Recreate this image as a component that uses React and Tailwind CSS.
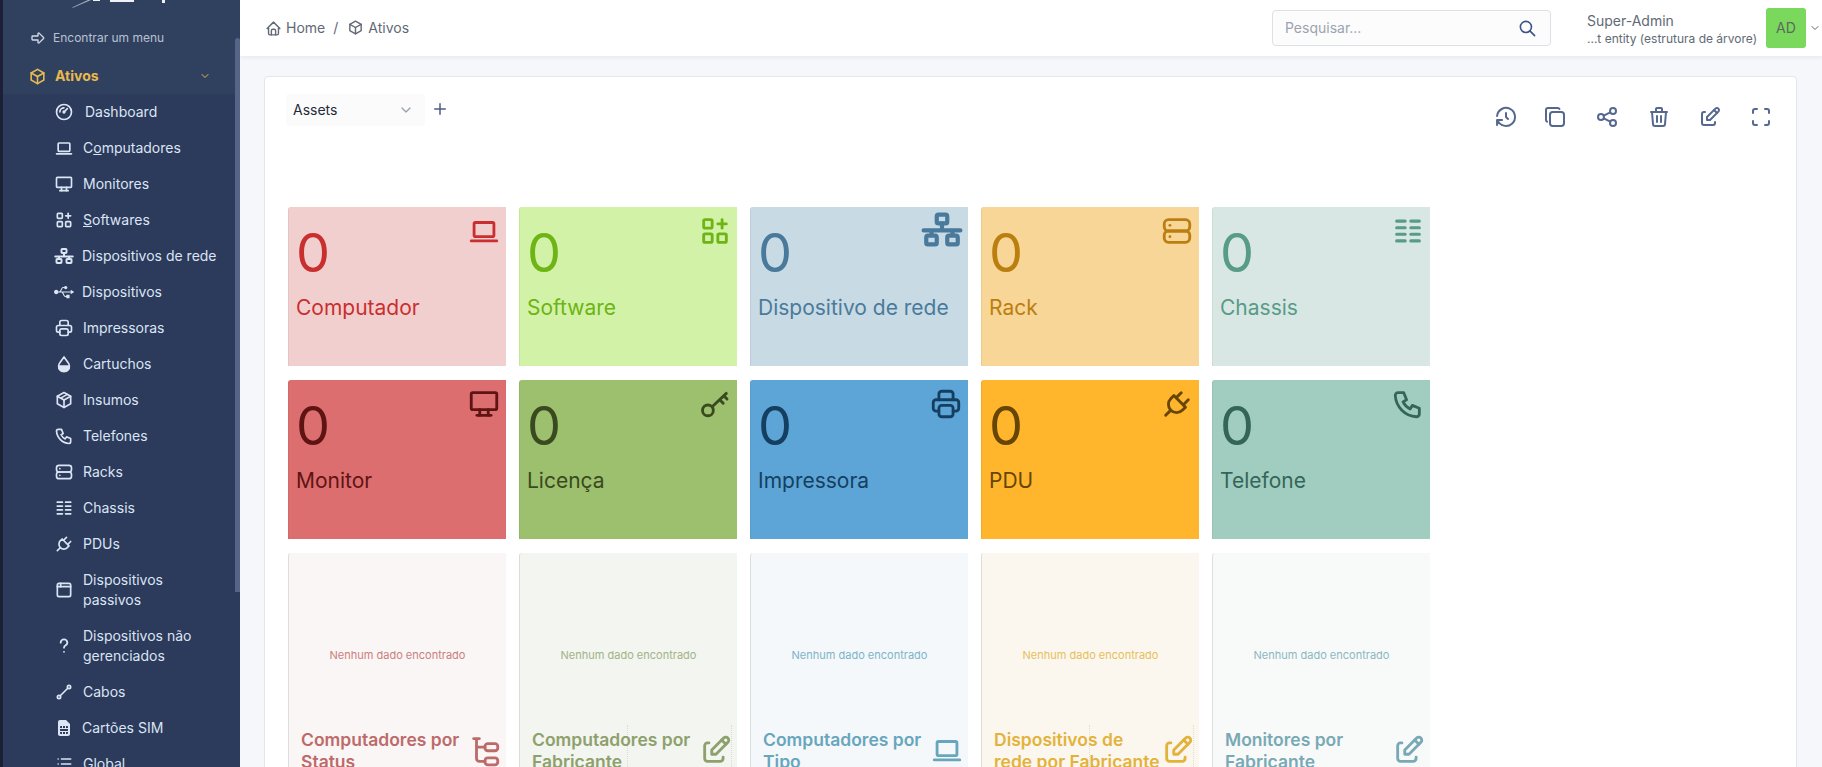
import React from "react";
import {
  TbArrowBigRight,
  TbBox,
  TbChevronDown,
  TbGauge,
  TbDeviceLaptop,
  TbDeviceDesktop,
  TbApps,
  TbPrinter,
  TbPackage,
  TbPhone,
  TbServer,
  TbPlug,
  TbLine,
  TbList,
  TbHome,
  TbSearch,
  TbPlus,
  TbHistory,
  TbCopy,
  TbShare,
  TbTrash,
  TbEdit,
  TbMaximize,
  TbBrowser,
} from "react-icons/tb";
import { FaUsb, FaSimCard } from "react-icons/fa";

function SitemapIcon({ className }) {
  return (
    <svg className={className} viewBox="0 0 24 20" fill="none" stroke="currentColor" strokeWidth="2.400" strokeLinecap="round" strokeLinejoin="round">
      <rect x="9" y="1.500" width="6" height="5" rx="1" />
      <path d="M12 6.500v4M1.500 10.500h21M6 10.500v2.500M18 10.500v2.500" />
      <rect x="3" y="13.500" width="6" height="5" rx="1" />
      <rect x="15" y="13.500" width="6" height="5" rx="1" />
    </svg>
  );
}

function ChassisIcon({ className }) {
  return (
    <svg className={className} viewBox="0 0 24 24" fill="none" stroke="currentColor" strokeWidth="2.200" strokeLinecap="round">
      <path d="M4 5h6M4 9.700h6M4 14.300h6M4 19h6M14 5h6M14 9.700h6M14 14.300h6M14 19h6" />
    </svg>
  );
}

function DropIcon({ className }) {
  return (
    <svg className={className} viewBox="0 0 24 24" fill="none" stroke="currentColor" strokeWidth="2" strokeLinecap="round" strokeLinejoin="round">
      <path d="M12 3.500l5 7a6.500 6.500 0 1 1 -10 0z" />
      <path d="M6 14.500h12v3l-3 3h-6l-3 -3z" fill="currentColor" />
    </svg>
  );
}

function QuestionIcon({ className }) {
  return (
    <svg className={className} viewBox="0 0 24 24" fill="none" stroke="currentColor" strokeWidth="2.200" strokeLinecap="round" strokeLinejoin="round">
      <path d="M8 8a4 4 0 0 1 8 0c0 1.500 -.8 2.400 -2 3.200c-1.300 .9 -2 1.600 -2 2.800" />
      <path d="M12 19v.01" />
    </svg>
  );
}

function OldKeyIcon({ className }) {
  return (
    <svg className={className} viewBox="0 0 24 24" fill="none" stroke="currentColor" strokeWidth="2" strokeLinecap="round" strokeLinejoin="round">
      <circle cx="7" cy="16.500" r="3.800" />
      <path d="M10 14l10 -9.500M15.500 9.200l2.300 2.300M18.500 6.500l2 2" />
    </svg>
  );
}

function TreeIcon({ className }) {
  return (
    <svg className={className} viewBox="0 0 24 24" fill="none" stroke="currentColor" strokeWidth="2" strokeLinecap="round" strokeLinejoin="round">
      <path d="M4 4h4M6 4v14a2 2 0 0 0 2 2h4M6 10h6" />
      <rect x="12" y="7.500" width="9" height="5" rx="2" />
      <rect x="12" y="17.500" width="9" height="5" rx="2" />
    </svg>
  );
}

const menu = [
  { icon: TbGauge, label: "Dashboard", textClass: "ml-[11px]" },
  { icon: TbDeviceLaptop, label: <>C<u>o</u>mputadores</> },
  { icon: TbDeviceDesktop, label: "Monitores" },
  { icon: TbApps, label: <><u>S</u>oftwares</> },
  { icon: SitemapIcon, label: "Dispositivos de rede", textClass: "ml-[8px]" },
  { icon: FaUsb, label: "Dispositivos", textClass: "ml-[8px]" },
  { icon: TbPrinter, label: "Impressoras" },
  { icon: DropIcon, label: "Cartuchos" },
  { icon: TbPackage, label: "Insumos" },
  { icon: TbPhone, label: "Telefones" },
  { icon: TbServer, label: "Racks" },
  { icon: ChassisIcon, label: "Chassis" },
  { icon: TbPlug, label: "PDUs" },
  { icon: TbBrowser, label: "Dispositivos passivos" },
  { icon: QuestionIcon, label: "Dispositivos não gerenciados" },
  { icon: TbLine, label: "Cabos" },
  { icon: FaSimCard, label: "Cartões SIM", iconClass: "p-[2px]", textClass: "ml-[8px]" },
  { icon: TbList, label: "Global" },
];

const tiles = [
  { label: "Computador", icon: TbDeviceLaptop, bg: "bg-[#f2cfcf]", fg: "text-[#c92f2f]" },
  { label: "Software", icon: TbApps, bg: "bg-[#d2f2a7]", fg: "text-[#6db414]" },
  { label: "Dispositivo de rede", icon: SitemapIcon, bg: "bg-[#c8dae4]", fg: "text-[#4a7a9b]", iconClass: "w-[42px] h-[35px] -mt-[2px]" },
  { label: "Rack", icon: TbServer, bg: "bg-[#f7d697]", fg: "text-[#bb7f10]" },
  { label: "Chassis", icon: ChassisIcon, bg: "bg-[#d8e7e3]", fg: "text-[#579b88]" },
  { label: "Monitor", icon: TbDeviceDesktop, bg: "bg-[#dd6e6f]", fg: "text-[#5f1414]" },
  { label: "Licença", icon: OldKeyIcon, bg: "bg-[#9cc06d]", fg: "text-[#3a4a20]" },
  { label: "Impressora", icon: TbPrinter, bg: "bg-[#5da5d7]", fg: "text-[#153f60]" },
  { label: "PDU", icon: TbPlug, bg: "bg-[#ffb52c]", fg: "text-[#664505]" },
  { label: "Telefone", icon: TbPhone, bg: "bg-[#a1cdc0]", fg: "text-[#356558]" },
];

const charts = [
  { title: "Computadores por Status", icon: TreeIcon, bg: "bg-[#faf6f6]", fg: "text-[#bd6a6a]", empty: "text-[#cb7e7e]" },
  { title: "Computadores por Fabricante", icon: TbEdit, bg: "bg-[#f2f5f0]", fg: "text-[#8ea06c]", empty: "text-[#a2b386]", dotted: true },
  { title: "Computadores por Tipo", icon: TbDeviceLaptop, bg: "bg-[#f4f8fa]", fg: "text-[#68a6bd]", empty: "text-[#7db4c9]" },
  { title: <>Dispositivos de<br />rede por Fabricante</>, icon: TbEdit, bg: "bg-[#fbf7ee]", fg: "text-[#e3b23c]", empty: "text-[#e8be5c]", dotted: true },
  { title: "Monitores por Fabricante", icon: TbEdit, bg: "bg-[#f8fafa]", fg: "text-[#78a9b4]", empty: "text-[#8cb7c1]" },
];

function App() {
  return (
    <div className="flex h-screen overflow-hidden bg-[#f5f7fb] text-sm font-['Inter',sans-serif]">
      <aside className="relative w-[240px] shrink-0 h-full overflow-hidden bg-[#2c3a5b] border-l-[3px] border-[#1b2036]">
        <div className="bg-[#30405f] h-[58px] relative">
          <svg className="absolute left-[69px] top-0 h-[8px] w-[100px]" viewBox="0 0 100 8">
            <path d="M0 7.500L16 0h3L1 7.800z" fill="#aab3c4" />
            <path d="M21 0h7v1h-7zM38 0h24v2h-24zM90 0h3v3h-3z" fill="#eef1f6" />
          </svg>
          <div className="flex items-center pt-[29px] pl-[27px] text-[12px] leading-[18px] text-[#b9c1d3]">
            <TbArrowBigRight className="w-[16px] h-[16px] text-[#d5dbe6]" />
            <span className="ml-[7px]">Encontrar um menu</span>
          </div>
        </div>
        <div className="relative flex items-center h-[36px] bg-[#30405f] pl-[25px] pr-[29px] text-[#e8b94f] font-bold">
          <span className="absolute -left-[3px] top-0 w-[3px] h-full bg-[#7f7868]" />
          <TbBox className="w-[19px] h-[19px]" />
          <span className="ml-[8px]">Ativos</span>
          <TbChevronDown className="ml-auto w-[12px] h-[12px]" />
        </div>
        <nav className="flex flex-col text-[#dbe5f4]">
          {menu.map((item, i) => {
            const Icon = item.icon;
            return (
              <div key={i} className="flex items-center py-2 pl-[51px] pr-[20px] leading-5">
                <Icon className={"w-[20px] h-[20px] shrink-0 " + (item.iconClass || "")} />
                <span className={item.textClass || "ml-[9px]"}>{item.label}</span>
              </div>
            );
          })}
        </nav>
        <div className="absolute right-0 top-[38px] w-[5px] h-[554px] rounded-t-[3px] bg-[#566488]" />
      </aside>

      <main className="flex-1 min-w-0 flex flex-col">
        <header className="h-[56px] shrink-0 bg-white flex items-center pl-[25px] pr-[1px] shadow-[0_2px_4px_rgba(30,41,59,0.06)] text-[#626976]">
          <TbHome className="w-[17px] h-[17px]" />
          <span className="ml-[4px]">Home</span>
          <span className="ml-[8px]">/</span>
          <TbBox className="w-[17px] h-[17px] ml-[9px] -mt-[2px]" />
          <span className="ml-[4px]">Ativos</span>

          <div className="ml-auto flex items-center w-[279px] h-[36px] rounded-[4px] border border-[#dce0e7] bg-[#fcfcfd] pl-[12px] pr-[13px]">
            <span className="text-[#9ca3af]">Pesquisar...</span>
            <TbSearch className="ml-auto w-[19px] h-[19px] text-[#3b5388]" />
          </div>
          <div className="ml-[36px] flex flex-col w-[179px]">
            <span className="leading-[20px]">Super-Admin</span>
            <span className="text-[12px] leading-[15px] whitespace-nowrap">...t entity (estrutura de árvore)</span>
          </div>
          <div className="w-[40px] h-[40px] rounded-[3px] bg-[#7ad85c] flex items-center justify-center text-[#5b6b5f]">AD</div>
          <TbChevronDown className="ml-[3px] w-[12px] h-[12px]" />
        </header>

        <div className="flex-1 min-h-0 pt-[20px] pl-[24px] pr-[25px]">
          <section className="bg-white rounded-[4px] border border-[#e3e6ed] h-[800px] pt-[17px] pl-[21px] pr-[22px]">
            <div className="flex items-start">
              <div className="flex items-center w-[139px] h-[32px] rounded-[3px] bg-[#fbfbfb] pl-[7px] pr-[11px] text-[#1f2a3c]">
                Assets
                <TbChevronDown className="ml-auto w-[16px] h-[16px] text-[#9aa1ad]" />
              </div>
              <TbPlus className="ml-[6px] mt-[6px] w-[18px] h-[18px] text-[#4a5d86]" />
              <div className="ml-auto mt-[11px] mr-[1px] flex gap-[27px] text-[#56688f]">
                <TbHistory className="w-[24px] h-[24px]" />
                <TbCopy className="w-[24px] h-[24px] -translate-x-[2px]" />
                <TbShare className="w-[24px] h-[24px] -translate-x-[1px]" />
                <TbTrash className="w-[24px] h-[24px]" />
                <TbEdit className="w-[24px] h-[24px]" />
                <TbMaximize className="w-[24px] h-[24px]" />
              </div>
            </div>

            <div className="mt-[78px] ml-[2px] grid grid-cols-[repeat(5,218px)] auto-rows-[159px] gap-x-[13px] gap-y-[14px]">
              {tiles.map((t) => {
                const Icon = t.icon;
                return (
                  <div key={t.label} className={"relative rounded-tl-[3px] border-l border-black/5 pl-[7px] pt-[16px] " + t.bg + " " + t.fg}>
                    <div className="text-[54px] leading-[60px]">0</div>
                    <div className="mt-[11px] text-[21px] leading-[28px]">{t.label}</div>
                    <div className="absolute top-[7px] right-[5px]">
                      <Icon className={t.iconClass || "w-[34px] h-[34px]"} />
                    </div>
                  </div>
                );
              })}
              {charts.map((c, i) => {
                const Icon = c.icon;
                return (
                  <div key={i} className={"relative h-[300px] rounded-tl-[3px] border-l border-black/10 " + c.bg}>
                    <div className={"absolute top-[94px] left-0 right-0 text-center text-[11px] leading-[16px] " + c.empty}>Nenhum dado encontrado</div>
                    {c.dotted && <div className="absolute top-[172px] left-[107px] w-[105px] h-[60px] border-x border-dotted border-black/10" />}
                    <div className={"absolute top-[176px] left-[12px] w-[175px] text-[17.500px] leading-[22px] font-semibold " + c.fg}>{c.title}</div>
                    <Icon className={"absolute top-[180px] right-[4px] w-[34px] h-[34px] " + c.fg} />
                  </div>
                );
              })}
            </div>
          </section>
        </div>
      </main>
    </div>
  );
}

export default App;
